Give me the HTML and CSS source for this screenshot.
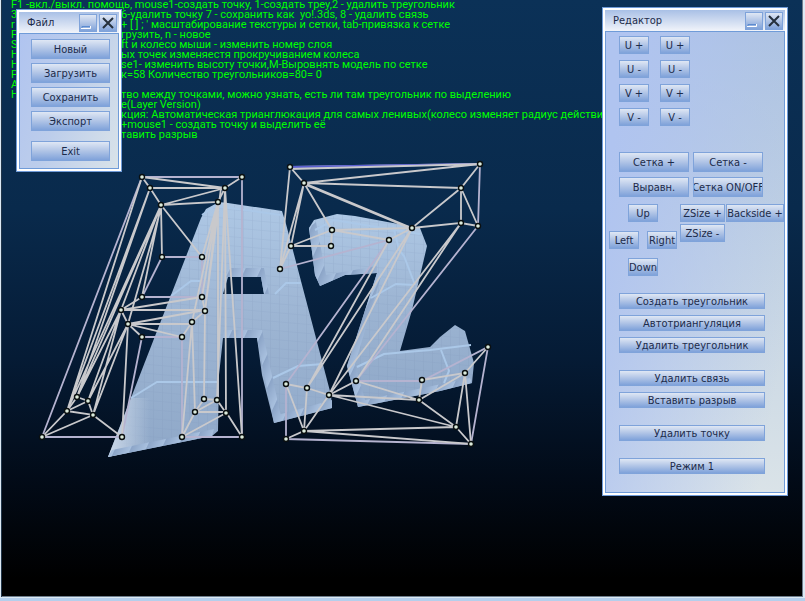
FILE: index.html
```html
<!DOCTYPE html>
<html lang="ru">
<head>
    <meta charset="UTF-8">
    <meta name="viewport" content="width=device-width, initial-scale=1.0">
    <title>Редактор</title>
    <link rel="stylesheet" href="styles.css">
</head>
<body>
    <main class="stage">
        <!-- Модель и сетка треугольников -->
        <svg class="scene" width="805" height="601" viewBox="0 0 805 601" aria-hidden="true">
            <defs>
                <linearGradient id="face" x1="0" y1="0" x2="0" y2="1">
                    <stop offset="0" stop-color="#aec8e5"/>
                    <stop offset="0.45" stop-color="#9db5d3"/>
                    <stop offset="1" stop-color="#8fa8c8"/>
                </linearGradient>
                <linearGradient id="tip" x1="0" y1="0" x2="1" y2="0">
                    <stop offset="0" stop-color="#ccd9e9"/>
                    <stop offset="1" stop-color="#ccd9e9" stop-opacity="0"/>
                </linearGradient>
                <pattern id="cells" width="9" height="9" patternUnits="userSpaceOnUse" patternTransform="skewY(5)">
                    <path d="M0 0H9M0 0V9" fill="none" stroke="#7891b3" stroke-opacity="0.25"/>
                </pattern>
                <linearGradient id="fold" x1="0" y1="0" x2="1" y2="0">
                    <stop offset="0" stop-color="#8ba4c7"/>
                    <stop offset="1" stop-color="#a9c1df"/>
                </linearGradient>
                <pattern id="rib" width="14" height="14" patternUnits="userSpaceOnUse" patternTransform="rotate(25)">
                    <rect width="14" height="14" fill="url(#fold)"/>
                </pattern>
                <path id="letter-a" fill-rule="evenodd" d="M108 457L201 218L206 209L219 202L228 203L282 211L286 224L331 395L332 408L274 423L262 375L257 338L223 338L219 375L218 431L212 436ZM228 277L223 294H264L261 277Z"/>
                <path id="letter-z" d="M309 228L314 220L337 214L355 216L420 228L427 246L412 310L400 351L430 347L440 337L455 325L465 331L474 363L472 383L440 391L358 407L347 366L362 320L377 273L345 275L320 286L315 275Z"/>
            </defs>

            <g>
                <use href="#letter-a" fill="url(#face)"/>
                <use href="#letter-a" fill="url(#cells)"/>
                <path fill="url(#tip)" d="M108 457L131 398L150 398L150 448Z"/>
                <path fill="url(#rib)" d="M229 268H264L269 294H264L261 277H225ZM223 330H262L282 421L274 423L257 338H223ZM112 450L214 429L212 436L108 457ZM278 415L332 400V408L274 423Z"/>
                <path class="shine" d="M171 296L191 281L202 281M131 398L157 382L218 382M275 294L286 283L301 283M273 378L298 366L323 364M202 215L215 206L281 215"/>
            </g>
            <g>
                <use href="#letter-z" fill="url(#face)"/>
                <use href="#letter-z" fill="url(#cells)"/>
                <path fill="url(#rib)" d="M309 228L316 222L326 275L377 266V273L345 275L320 286L315 275ZM347 366L355 364L365 400L470 378L472 383L440 391L358 407ZM347 366L377 273L382 273L355 364Z"/>
                <path class="shine" d="M315 230L334 220L420 234M393 225L399 250L404 256L415 285M371 298L396 284L414 285M357 367L384 354L430 350L471 345M441 350L449 371L444 383"/>
            </g>

            <!-- Связи -->
            <path class="edge border" d="M142 177H242V437H182V337H142L122 437H42L142 177ZM162 257H202V297H142L162 257ZM290 167L480 164L478 226L356 381H422L488 347L471 444L286 439V384L389 240L280 269"/>
            <path class="edge selected" d="M290 167L480 164"/>
            <path class="edge" d="M142 177L225 188H150L142 177M150 188L161 205L225 188L242 177M161 205L218 202L225 188M161 205L162 257M161 205L202 257M161 205L142 297M161 205L121 310M162 205L128 324M142 177L67 411M150 188L67 411M150 188L77 397M161 205L77 397M121 310L77 397M121 310L88 401M128 324L88 401M128 324L93 415M121 310L93 415M161 205L67 411"/>
            <path class="edge" d="M142 297L121 310L202 297M121 310H205L128 324H192M128 324L182 337L192 322L205 311L202 297M121 310L128 324L142 337M128 324L122 437M122 437L93 415L42 437L67 411L93 415L88 401L77 397L67 411L88 401"/>
            <path class="edge" d="M218 202L202 257M218 202L202 297M218 202L205 311L204 399M218 202L192 322L195 412M192 322L182 437L195 412H226L242 437L225 188L217 400L204 399L195 412L217 400L226 413L182 437M218 202V400M225 188L226 413M221 188L205 311"/>
            <path class="edge" d="M290 169L480 164L304 183L290 167L280 269L304 183L461 188L480 164M304 183L412 228L461 188L461 223L412 228L332 230L304 183L291 246L280 269M306 185L414 230M461 188L478 226L461 223L329 395M461 223L356 381M332 230L389 240L412 228M332 230L331 246H291L332 230"/>
            <path class="edge" d="M389 240L307 388M412 228L307 388M412 228L329 395M286 384L307 388L329 395L356 381L419 400L422 380L465 373L488 347M286 384L304 431L307 388M304 431L329 395L419 400L465 373L456 427L419 400M329 395L456 427L304 431L286 439M304 431L471 444L456 427M465 373L471 444"/>

            <!-- Точки -->
            <g class="points">
                <circle cx="142" cy="177" r="2.5"/><circle cx="242" cy="177" r="2.5"/><circle cx="150" cy="188" r="2.5"/><circle cx="225" cy="188" r="2.5"/>
                <circle cx="161" cy="205" r="2.5"/><circle cx="218" cy="202" r="2.5"/><circle cx="162" cy="257" r="2.5"/><circle cx="202" cy="257" r="2.5"/>
                <circle cx="142" cy="297" r="2.5"/><circle cx="202" cy="297" r="2.5"/><circle cx="121" cy="310" r="2.5"/><circle cx="205" cy="311" r="2.5"/>
                <circle cx="128" cy="324" r="2.5"/><circle cx="192" cy="322" r="2.5"/><circle cx="142" cy="337" r="2.5"/><circle cx="182" cy="337" r="2.5"/>
                <circle cx="77" cy="397" r="2.5"/><circle cx="88" cy="401" r="2.5"/><circle cx="67" cy="411" r="2.5"/><circle cx="93" cy="415" r="2.5"/>
                <circle cx="42" cy="437" r="2.5"/><circle cx="122" cy="437" r="2.5"/><circle cx="204" cy="399" r="2.5"/><circle cx="217" cy="400" r="2.5"/>
                <circle cx="195" cy="412" r="2.5"/><circle cx="226" cy="413" r="2.5"/><circle cx="182" cy="437" r="2.5"/><circle cx="242" cy="437" r="2.5"/>
                <circle cx="290" cy="167" r="2.5"/><circle cx="480" cy="164" r="2.5"/><circle cx="304" cy="183" r="2.5"/><circle cx="461" cy="188" r="2.5"/>
                <circle cx="461" cy="223" r="2.5"/><circle cx="478" cy="226" r="2.5"/><circle cx="412" cy="228" r="2.5"/><circle cx="389" cy="240" r="2.5"/>
                <circle cx="332" cy="230" r="2.5"/><circle cx="331" cy="246" r="2.5"/><circle cx="291" cy="246" r="2.5"/><circle cx="280" cy="269" r="2.5"/>
                <circle cx="286" cy="384" r="2.5"/><circle cx="307" cy="388" r="2.5"/><circle cx="329" cy="395" r="2.5"/><circle cx="356" cy="381" r="2.5"/>
                <circle cx="422" cy="380" r="2.5"/><circle cx="419" cy="400" r="2.5"/><circle cx="465" cy="373" r="2.5"/><circle cx="488" cy="347" r="2.5"/>
                <circle cx="304" cy="431" r="2.5"/><circle cx="286" cy="439" r="2.5"/><circle cx="456" cy="427" r="2.5"/><circle cx="471" cy="444" r="2.5"/>
            </g>
        </svg>

        <!-- Помощь -->
        <div class="help">
            <p>F1 -вкл./выкл. помощь, mouse1-создать точку, 1-создать треу,2 - удалить треугольник</p>
            <p><span>3</span><span>6-удалить точку 7 - сохранить как &nbsp;yo!.3ds, 8 - удалить связь</span></p>
            <p><span>r</span><span>+ [ ] ; ' масштабирование текстуры и сетки, tab-привязка к сетке</span></p>
            <p><span>F</span><span>грузить, n - новое</span></p>
            <p><span>S</span><span>ft и колесо мыши - изменить номер слоя</span></p>
            <p><span>Н</span><span>ых точек изменяестя прокручиванием колеса</span></p>
            <p><span>Н</span><span>se1- изменить высоту точки,М-Выровнять модель по сетке</span></p>
            <p><span>Р</span><span>к=58 Количество треугольников=80= 0</span></p>
            <p><span>А</span></p>
            <p><span>Н</span><span>тво между точками, можно узнать, есть ли там треугольник по выделению</span></p>
            <p><span></span><span>е(Layer Version)</span></p>
            <p><span></span><span>кция: Автоматическая трианглюкация для самых ленивых(колесо изменяет радиус действия</span></p>
            <p><span></span><span>+mouse1 - создать точку и выделить её</span></p>
            <p><span></span><span>тавить разрыв</span></p>
        </div>

        <section class="window file-window">
            <header class="titlebar">
                <h2>Файл</h2>
                <button class="tool" aria-label="Свернуть"><svg width="14" height="14" viewBox="0 0 14 14"><path d="M1 13V10.500H9" stroke="#5b8bd0" fill="none"/><path d="M0 12.500H9.500V10" stroke="#fff" fill="none"/></svg></button>
                <button class="tool" aria-label="Закрыть"><svg width="14" height="14" viewBox="0 0 14 14"><path d="M2 2L12 12M12 2L2 12" stroke="#25303c" stroke-width="2"/></svg></button>
            </header>
            <div class="panel file-panel">
                <button>Новый</button>
                <button>Загрузить</button>
                <button>Сохранить</button>
                <button>Экспорт</button>
                <button class="exit">Exit</button>
            </div>
        </section>

        <section class="window editor-window">
            <header class="titlebar">
                <h2>Редактор</h2>
                <button class="tool" aria-label="Свернуть"><svg width="14" height="14" viewBox="0 0 14 14"><path d="M1 13V10.500H9" stroke="#5b8bd0" fill="none"/><path d="M0 12.500H9.500V10" stroke="#fff" fill="none"/></svg></button>
                <button class="tool" aria-label="Закрыть"><svg width="14" height="14" viewBox="0 0 14 14"><path d="M2 2L12 12M12 2L2 12" stroke="#25303c" stroke-width="2"/></svg></button>
            </header>
            <div class="panel editor-panel">
                <div class="uv">
                    <button>U +</button><button>U +</button>
                    <button>U -</button><button>U -</button>
                    <button>V +</button><button>V +</button>
                    <button>V -</button><button>V -</button>
                </div>
                <div class="grid-buttons">
                    <button>Сетка +</button><button>Сетка -</button>
                    <button>Выравн.</button><button>Сетка ON/OFF</button>
                </div>
                <div class="move">
                    <div class="arrows">
                        <button class="up">Up</button>
                        <button class="left">Left</button>
                        <button class="right">Right</button>
                        <button class="down">Down</button>
                    </div>
                    <div class="size">
                        <button>ZSize +</button><button>Backside +</button>
                        <button>ZSize -</button>
                    </div>
                </div>
                <div class="actions">
                    <div class="group">
                        <button>Создать треугольник</button>
                        <button>Автотриангуляция</button>
                        <button>Удалить треугольник</button>
                    </div>
                    <div class="group">
                        <button>Удалить связь</button>
                        <button>Вставить разрыв</button>
                    </div>
                    <button>Удалить точку</button>
                    <button>Режим 1</button>
                </div>
            </div>
        </section>
    </main>
</body>
</html>
```
FILE: styles.css
```css
* {
    box-sizing: border-box;
}

body {
    margin: 0;
    font-family: Tahoma, "DejaVu Sans Condensed", "DejaVu Sans", sans-serif;
    font-size: 11px;
    color: #1c2b4a;
    background: #b4cfec;
}

/* Рабочая область */
.stage {
    position: relative;
    height: calc(100vh - 3px);
    overflow: hidden;
    border: solid #dce9f4;
    border-width: 0 2px 1px 1px;
    background: linear-gradient(#0b3157, #092a4c 35%, #051b35 60%, #020b18 80%, #000 97%);
    box-shadow: inset 1px 0 #22364a, inset -1px -1px #6d7d8c;
}

.scene {
    position: absolute;
    top: 0;
    left: -1px;
}

.edge {
    fill: none;
    stroke: #c9c9cc;
    stroke-width: 1.8;
}

.border {
    stroke: #b5b3d0;
}

.selected {
    stroke: #5a5fd0;
}

.shine {
    fill: none;
    stroke: #abc8e8;
    stroke-width: 2;
}

.points {
    fill: #dcebdc;
    stroke: #0a0f10;
    stroke-width: 1.4;
}

/* Текст помощи */
.help {
    position: absolute;
    top: 0;
    left: 10px;
    color: #00ff00;
    font-family: Roboto, sans-serif;
    line-height: 10px;
    white-space: nowrap;
}

.help p {
    display: flex;
    height: 10px;
    margin: 0;
}

.help span:first-child {
    width: 110px;
}

/* Окна */
.window {
    position: absolute;
    padding: 2px;
    border: 1px solid #6f9bd8;
    background: #fff;
}

.file-window {
    top: 9px;
    left: 15px;
    width: 106px;
}

.editor-window {
    top: 7px;
    left: 601px;
    width: 186px;
}

.titlebar {
    display: flex;
    align-items: center;
    gap: 2px;
    height: 21px;
    padding: 0 2px 0 8px;
    background: linear-gradient(#a9c0e6, #f1f4fa);
}

.titlebar h2 {
    flex: 1;
    margin: 0;
    font-size: 11px;
    font-weight: normal;
}

.panel {
    border: 1px solid #6f9bd8;
}

.file-panel {
    display: flex;
    flex-direction: column;
    gap: 4px;
    padding: 5px 8px 7px 11px;
    background: linear-gradient(110deg, #b0c4f0, #bccdeb 45%, #d9e3e9);
}

.file-panel .exit {
    margin-top: 6px;
}

.editor-panel {
    padding: 4px 0 18px 13px;
    background: linear-gradient(100deg, #b0c4f0 10%, transparent 90%), linear-gradient(#adc3de, #dae3e8);
}

/* Кнопки */
button {
    display: flex;
    align-items: center;
    justify-content: center;
    min-width: 0;
    height: 20px;
    padding: 2px 0 0;
    overflow: hidden;
    border: 1px solid #7fa3da;
    background: linear-gradient(#dfe7f4, #b0c4e6 50%, #7fa2da);
    color: inherit;
    font: inherit;
    line-height: 14px;
    white-space: nowrap;
}

.tool {
    width: 18px;
    height: 18px;
    padding: 0;
}

.uv {
    display: grid;
    grid-template-columns: 30px 30px;
    gap: 6px 11px;
    margin-bottom: 26px;
}

.uv button,
.move button {
    height: 18px;
}

.grid-buttons {
    display: grid;
    grid-template-columns: 70px 70px;
    gap: 5px 4px;
    margin-bottom: 7px;
}

.move {
    display: flex;
    justify-content: space-between;
    margin: 0 0 17px -10px;
}

.arrows {
    display: grid;
    grid-template-columns: repeat(4, 17px);
    gap: 9px 0;
}

.arrows .up,
.arrows .down {
    grid-column: 2 / 4;
    width: 30px;
    justify-self: center;
}

.arrows .left {
    grid-column: 1 / 3;
    width: 30px;
}

.arrows .right {
    grid-column: 3 / 5;
    width: 30px;
    justify-self: end;
}

.size {
    display: grid;
    grid-template-columns: 45px 58px;
    gap: 2px 1px;
    align-content: start;
}

.actions {
    display: flex;
    flex-direction: column;
    gap: 17px;
    margin-right: 19px;
}

.group {
    display: flex;
    flex-direction: column;
    gap: 6px;
}

.actions button {
    height: 16px;
}
```
